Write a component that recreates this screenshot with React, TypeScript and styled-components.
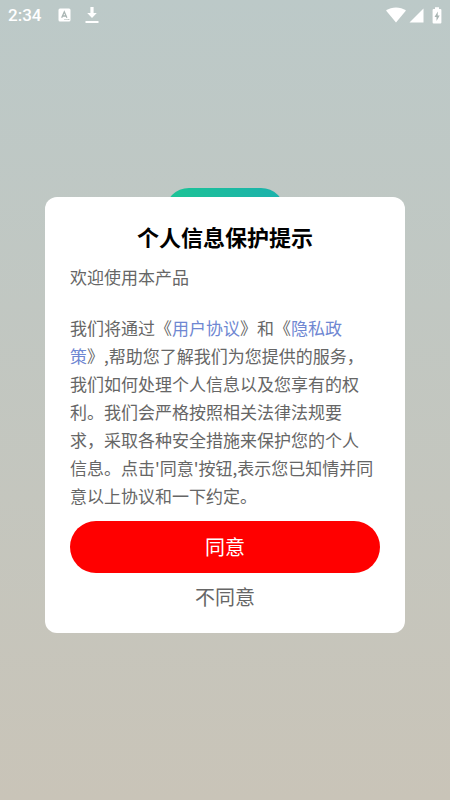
import React from "react";
import styled, { createGlobalStyle } from "styled-components";

const GlobalStyle = createGlobalStyle`
  * { box-sizing: border-box; }
  body {
    margin: 0;
    font-family: "Noto Sans CJK SC", "Noto Sans", sans-serif;
  }
`;

const Screen = styled.div`
  min-height: 100vh;
  display: flex;
  flex-direction: column;
  background: linear-gradient(180deg, #bcc9c8 0%, #c9c4b8 100%);
`;

const StatusBar = styled.header`
  height: 30px;
  padding: 0 8px;
  display: flex;
  align-items: center;
  justify-content: space-between;
  color: #fff;
`;

const StatusGroup = styled.div<{ $gap: number }>`
  display: flex;
  align-items: center;
  gap: ${({ $gap }) => $gap}px;

  svg { display: block; }
`;

const Clock = styled.time`
  margin-right: 3px;
  font: 500 17px/30px Roboto, sans-serif;
`;

const Main = styled.main`
  flex: 1;
  display: flex;
  align-items: center;
  justify-content: center;
`;

const DialogArea = styled.div`
  position: relative;
  width: 80%;
`;

const AppLogo = styled.div`
  position: absolute;
  top: -9px;
  left: calc(50% - 60px);
  width: 120px;
  height: 120px;
  border-radius: 24px;
  background: linear-gradient(90deg, #1cc495, #1cb1ac);
`;

const Dialog = styled.section`
  position: relative;
  display: flex;
  flex-direction: column;
  padding: 24px 25px 12px;
  border-radius: 12px;
  background: #fff;
`;

const Title = styled.h1`
  margin: 0 0 12px;
  font-size: 22px;
  line-height: 30px;
  font-weight: 700;
  text-align: center;
  color: #000;
`;

const Paragraph = styled.p`
  margin: 0;
  font-size: 17px;
  line-height: 28px;
  color: #666;
  white-space: pre;

  & + & { margin-top: 23px; }
`;

const PolicyLink = styled.a`
  color: #6f87d2;
  text-decoration: none;
`;

const Button = styled.button<{ $primary?: boolean }>`
  height: ${({ $primary }) => ($primary ? 52 : 48)}px;
  margin-top: ${({ $primary }) => ($primary ? 11 : 0)}px;
  padding: 0;
  border: 0;
  border-radius: 26px;
  background: ${({ $primary }) => ($primary ? "#f00" : "transparent")};
  color: ${({ $primary }) => ($primary ? "#fff" : "#666")};
  font-family: inherit;
  font-size: 20px;
  line-height: 28px;
  cursor: pointer;
`;

const KeyboardIcon = () => (
  <svg width="13" height="14" viewBox="0 0 13 14" aria-hidden="true">
    <rect x="0.5" y="0.5" width="12" height="13" rx="1.5" fill="#fff" />
    <path d="M3.7 9.8 6.3 3.8 8.9 9.8M4.7 8h3.2" fill="none" stroke="#a9b5b3" strokeWidth="1.3" />
    <path d="M6.5 11.5h1M8.5 11.5h1M10.3 11.5h1" stroke="#a9b5b3" />
  </svg>
);

const DownloadIcon = () => (
  <svg width="14" height="18" viewBox="0 0 14 18" aria-hidden="true" fill="#fff">
    <path d="M5.4 1h3.2v6h3.2L7 12 2.2 7h3.2zM0.5 15h13v2h-13z" />
  </svg>
);

const WifiIcon = () => (
  <svg width="20" height="16" viewBox="0 0 20 16" aria-hidden="true" fill="#fff">
    <path d="M0 3.6C5.8-.7 14.2-.7 20 3.6L10 15.6z" />
  </svg>
);

const SignalIcon = () => (
  <svg width="15" height="15" viewBox="0 0 15 15" aria-hidden="true" fill="#fff">
    <path d="M14.5 0.5v14H0.5z" />
  </svg>
);

const BatteryIcon = () => (
  <svg width="10" height="17" viewBox="0 0 10 17" aria-hidden="true">
    <path
      d="M3 0.3h4V2h1.4q1 0 1 1v12.6q0 1-1 1H1.6q-1 0-1-1V3q0-1 1-1H3z"
      fill="#fff"
    />
    <path d="M5.8 4.4 2.5 10h2v4L7.7 8.4h-2z" fill="#a9b5b3" />
  </svg>
);

export default function App() {
  return (
    <Screen>
      <GlobalStyle />
      <StatusBar>
        <StatusGroup $gap={14}>
          <Clock>2:34</Clock>
          <KeyboardIcon />
          <DownloadIcon />
        </StatusGroup>
        <StatusGroup $gap={8}>
          <StatusGroup $gap={3}>
            <WifiIcon />
            <SignalIcon />
          </StatusGroup>
          <BatteryIcon />
        </StatusGroup>
      </StatusBar>
      <Main>
        <DialogArea>
          <AppLogo />
          <Dialog role="dialog" aria-labelledby="dialog-title">
            <Title id="dialog-title">个人信息保护提示</Title>
            <Paragraph>欢迎使用本产品</Paragraph>
            <Paragraph>
              我们将通过《<PolicyLink href="#terms">用户协议</PolicyLink>》和《
              <PolicyLink href="#privacy">{"隐私政\n策"}</PolicyLink>
              {"》,帮助您了解我们为您提供的服务，\n"}
              {"我们如何处理个人信息以及您享有的权\n"}
              {"利。我们会严格按照相关法律法规要\n"}
              {"求，采取各种安全措施来保护您的个人\n"}
              {"信息。点击'同意'按钮,表示您已知情并同\n"}
              {"意以上协议和一下约定。"}
            </Paragraph>
            <Button type="button" $primary>同意</Button>
            <Button type="button">不同意</Button>
          </Dialog>
        </DialogArea>
      </Main>
    </Screen>
  );
}
